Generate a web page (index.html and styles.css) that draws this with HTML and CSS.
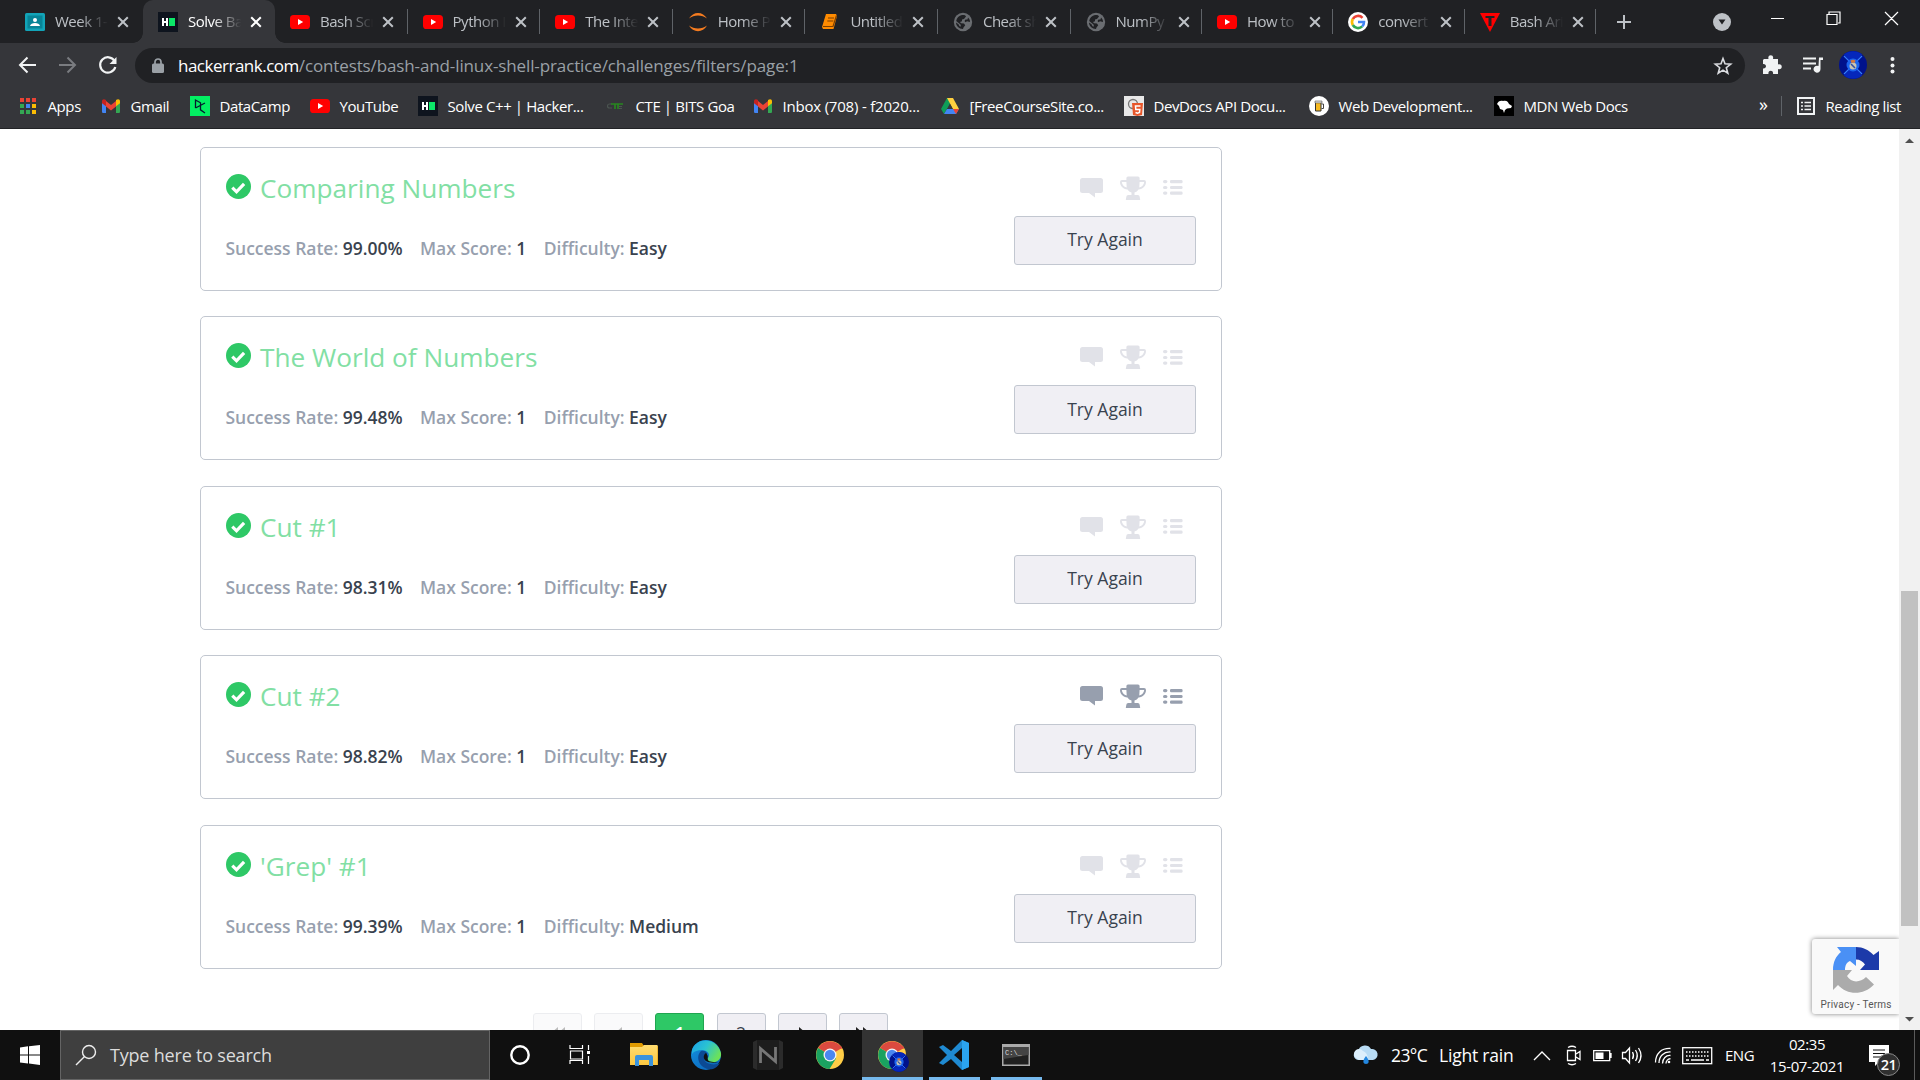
FILE: index.html
```html
<!DOCTYPE html>
<html lang="en">
<head>
<meta charset="utf-8">
<title>Solve Bash | HackerRank</title>
<link rel="stylesheet" href="styles.css">
</head>
<body>
<svg class="defs" width="0" height="0">
  <symbol id="close" viewBox="0 0 12 12"><path d="M1.2 1.2l9.6 9.6M10.8 1.2l-9.6 9.6" stroke="currentColor" stroke-width="2" fill="none"/></symbol>
  <symbol id="youtube" viewBox="0 0 20 20"><rect y="3" width="20" height="14" rx="3.6" fill="#f00"/><path d="M8 7v6l5.2-3z" fill="#fff"/></symbol>
  <symbol id="hr" viewBox="0 0 20 20"><path d="M0 0h20v20H0z" fill="#0e141e"/><path d="M4 6h2v3h2V6h2v8H8v-3H6v3H4z" fill="#fff"/><path d="M11 6h6v8h-6z" fill="#0ce868"/></symbol>
  <symbol id="globe" viewBox="0 0 20 20"><circle cx="10" cy="10" r="9.2" fill="#6a6d71"/><path d="M9 3c2-.3 4 .2 4 1.500L11 7 9 7.500v1.700l-2 .8 1 1.200 3 .3 1.200 1.800-1.700 2.200-.5 1.500C6 17 3 14 3 10.500l2.500 1.800 1 2 1.500.2-.5-2L5 10.500 3.200 9C3.700 6 6 3.500 9 3zM15 5.500c1.300 1.200 2 2.500 2 4.500l-3-.8-1.500 1L11.500 9l1-1.500h2z" fill="#202124"/></symbol>
  <symbol id="gmail" viewBox="0 0 20 20"><path d="M1 5v10.500c0 1 .5 1.500 1.500 1.500H5V8z" fill="#4285f4"/><path d="M15 8v9h2.500c1 0 1.500-.5 1.500-1.500V5z" fill="#34a853"/><path d="M5 5l5 4 5-4v5.500l-5 4-5-4z" fill="#ea4335"/><path d="M1 5.500C1 3 3 2.500 5 4v6.200L1 7.300z" fill="#c5221f"/><path d="M19 5.500C19 3 17 2.500 15 4v6.200l4-2.900z" fill="#fbbc04"/></symbol>
  <symbol id="chrome" viewBox="0 0 28 28"><circle cx="14" cy="14" r="14" fill="#ffcd46"/><path d="M14 14L2 7a14 14 0 0 1 24 0z" fill="#db4a3f"/><path d="M2 7a14 14 0 0 0 11.500 21L20 17.500 14 14z" fill="#1aa260"/><path d="M14 7.500h12.300L25 5H14z" fill="#db4a3f"/><circle cx="14" cy="14" r="6.500" fill="#f4f4f4"/><circle cx="14" cy="14" r="5.200" fill="#4b87f0"/></symbol>
  <symbol id="crest" viewBox="0 0 28 28"><circle cx="14" cy="14" r="14" fill="#00128c"/><path d="M14 14L5 3.500a14 14 0 0 1 18 0zM14 14L5 24.500a14 14 0 0 0 18 0z" fill="#0527bb"/><path d="M5 5l9 9 9-9M5 23l9-9 9 9" stroke="#347dff" stroke-width="1.200" fill="none"/><circle cx="14" cy="14" r="6.500" fill="#1b65ef"/><circle cx="14" cy="15" r="3.500" fill="#c9c6b4"/><path d="M12 13l4 4" stroke="#3350a0" stroke-width="1.600"/><path d="M11.500 9.500q2.500-1.500 5 0l-.7 2.200h-3.600z" fill="#d7793a"/></symbol>
  <symbol id="check" viewBox="0 0 25 25"><circle cx="12.500" cy="12.500" r="12.500" fill="#2ec866"/><path d="M6.300 13.700l4.200 4.100 7.600-7.900" stroke="#fff" stroke-width="3.200" fill="none"/></symbol>
  <symbol id="comment" viewBox="0 0 23 20"><path d="M2.500 0h18A2.500 2.500 0 0 1 23 2.500v10a2.500 2.500 0 0 1-2.500 2.500H15v4.500L9 15H2.500A2.500 2.500 0 0 1 0 12.500v-10A2.500 2.500 0 0 1 2.500 0z"/></symbol>
  <symbol id="trophy" viewBox="0 0 26 24"><path fill-rule="evenodd" d="M8 .5h10a1.600 1.600 0 0 1 1.600 1.600V4H24q2 0 2 2c0 4-3 7-7.500 7.500-1 1.500-2.300 2.500-4 3v2.500h3.500q1.800 0 1.800 2.500l.4 2.500H5.800l.4-2.500q0-2.500 1.800-2.500h3.500v-2.500c-1.700-.5-3-1.500-4-3C3 13 0 10 0 6q0-2 2-2h4.400V2.100A1.600 1.600 0 0 1 8 .5zM1.800 6c.2 2.600 2 4.600 4.900 5.500L6.400 6zM24.200 6h-4.600l-.3 5.500c2.900-.9 4.700-2.900 4.900-5.500z"/></symbol>
  <symbol id="list" viewBox="0 0 20 15"><rect width="4.400" height="3.200" rx="1.600"/><rect y="5.900" width="4.400" height="3.200" rx="1.600"/><rect y="11.500" width="4.400" height="3.200" rx="1.600"/><rect x="7" width="12.600" height="3.200" rx="1.300"/><rect x="7" y="5.900" width="12.600" height="3.200" rx="1.300"/><rect x="7" y="11.500" width="12.600" height="3.200" rx="1.300"/></symbol>
</svg>

<header class="browser">
  <div class="tabstrip">
    <div class="tab plain"><svg class="fav" viewBox="0 0 20 20"><rect y="1" width="20" height="18" rx="1.500" fill="#12a4b8"/><path d="M2.500 3.500h15v13h-15z" fill="#078497"/><circle cx="10" cy="8" r="2" fill="#fff"/><path d="M5 14c.5-4 9.500-4 10 0z" fill="#fff"/></svg><span class="name">Week 1-</span><svg class="x"><use href="#close"/></svg></div>
    <div class="tab active"><svg class="fav"><use href="#hr"/></svg><span class="name">Solve Ba</span><svg class="x"><use href="#close"/></svg></div>
    <div class="tab"><svg class="fav"><use href="#youtube"/></svg><span class="name">Bash Scr</span><svg class="x"><use href="#close"/></svg></div>
    <div class="tab"><svg class="fav"><use href="#youtube"/></svg><span class="name">Python I</span><svg class="x"><use href="#close"/></svg></div>
    <div class="tab"><svg class="fav"><use href="#youtube"/></svg><span class="name">The Inte</span><svg class="x"><use href="#close"/></svg></div>
    <div class="tab"><svg class="fav" viewBox="0 0 20 20"><path d="M1 6.500C5-1 15-1 19 6.500 14 2.500 6 2.500 1 6.500zM1 13.500C5 21 15 21 19 13.500 14 17.500 6 17.500 1 13.500z" fill="#f57c20"/></svg><span class="name">Home P</span><svg class="x"><use href="#close"/></svg></div>
    <div class="tab"><svg class="fav" viewBox="0 0 20 20"><path d="M6 2h10l1 2-3.500 13H3l-1-2z" fill="#ff8b00"/><path d="M8 6h6M7.300 9h6M3 14.500h10l3.500-11" stroke="#7d3f00" stroke-width="1.200" fill="none"/></svg><span class="name">Untitled</span><svg class="x"><use href="#close"/></svg></div>
    <div class="tab"><svg class="fav"><use href="#globe"/></svg><span class="name">Cheat sh</span><svg class="x"><use href="#close"/></svg></div>
    <div class="tab late"><svg class="fav"><use href="#globe"/></svg><span class="name">NumPy</span><svg class="x"><use href="#close"/></svg></div>
    <div class="tab late"><svg class="fav"><use href="#youtube"/></svg><span class="name">How to</span><svg class="x"><use href="#close"/></svg></div>
    <div class="tab late"><svg class="fav" viewBox="0 0 20 20"><circle cx="10" cy="10" r="10" fill="#fff"/><g fill="none" stroke-width="2.600"><path d="M14.500 5.800A6 6 0 0 0 4.800 7.200" stroke="#ea4335"/><path d="M4.800 7A6 6 0 0 0 4.800 13" stroke="#fbbc05"/><path d="M4.800 13a6 6 0 0 0 9.400 1.400" stroke="#34a853"/><path d="M14.200 14.400A6 6 0 0 0 16 10h-6" stroke="#4285f4"/></g></svg><span class="name">convert</span><svg class="x"><use href="#close"/></svg></div>
    <div class="tab late"><svg class="fav" viewBox="0 0 20 20"><path d="M0 1h20l-10 19z" fill="#f00"/><path d="M5.500 4h9v2h-3v8h-3V6h-3z" fill="#202124"/></svg><span class="name">Bash Ari</span><svg class="x"><use href="#close"/></svg></div>
    <svg class="strip-end" viewBox="0 0 324 43" fill="none"><path d="M21 22h14M28 15v14" stroke="#bdc1c6" stroke-width="2"/><circle cx="126" cy="22" r="9" fill="#bdc1c6"/><path d="M122.500 19.500h7l-3.500 5z" fill="#202124"/><path d="M175 18.500h13M231 14.500h10v10h-10zM233 14v-2h11v11h-2M289 12l13 13M302 12l-13 13" stroke="#fff" stroke-width="1.200"/></svg>
  </div>
  <div class="toolbar">
    <svg class="nav" viewBox="0 0 135 43" fill="none" stroke-width="2"><path d="M36 22H20m7.500-7.500L20 22l7.500 7.500" stroke="#f1f3f4"/><path d="M59 22h16m-7.500-7.500L75 22l-7.500 7.500" stroke="#7a7c80"/><path d="M114.500 18a7.700 7.700 0 1 0 .8 6" stroke="#f1f3f4" stroke-width="2.200"/><path d="M116.500 14v7h-7z" fill="#f1f3f4"/></svg>
    <div class="omnibox">
      <svg class="lock" viewBox="0 0 12 15"><path d="M3 6V4a3 3 0 0 1 6 0v2" fill="none" stroke="#9aa0a6" stroke-width="1.700"/><rect y="5.500" width="12" height="9.500" rx="1.500" fill="#9aa0a6"/></svg>
      <span class="url"><b>hackerrank.com</b>/contests/bash-and-linux-shell-practice/challenges/filters/page:1</span>
      <svg class="star" viewBox="0 0 20 20"><path d="M10 2.500l2 5.300 5.700.3-4.400 3.600 1.500 5.500L10 14.100l-4.800 3.100 1.500-5.500-4.400-3.600 5.700-.3z" fill="none" stroke="#dadce0" stroke-width="1.600"/></svg>
    </div>
    <svg class="tools" viewBox="0 0 175 43"><path d="M19 16h4.500c-1.500-5 6-5 4.500 0h5v5.500c5-1.500 5 6 0 4.500V31h-5c1-4.500-5.500-4.500-4.500 0H18v-5.500c4 .5 4-5 0-4.500v-4z" fill="#f1f3f4"/><path d="M58 15.500h13M58 20.500h13M58 25.500h8" stroke="#f1f3f4" stroke-width="2"/><path d="M74 14.500h4v2.500h-2.500v9a3.500 3.500 0 1 1-2-3z" fill="#f1f3f4"/><use href="#crest" x="94" y="8" width="28" height="28"/><g fill="#f1f3f4"><circle cx="147.500" cy="16" r="2"/><circle cx="147.500" cy="22.500" r="2"/><circle cx="147.500" cy="28.500" r="2"/></g></svg>
  </div>
  <nav class="bookmarks">
    <a><svg class="fav" viewBox="0 0 20 20"><path d="M2 2h4v4H2zm6 0h4v4H8zm6 0h4v4h-4z" fill="#ea4335"/><path d="M2 8h4v4H2zm0 6h4v4H2zm6 0h4v4H8z" fill="#34a853"/><path d="M8 8h4v4H8z" fill="#4285f4"/><path d="M14 8h4v4h-4zm0 6h4v4h-4z" fill="#fbbc04"/></svg>Apps</a>
    <a><svg class="fav"><use href="#gmail"/></svg>Gmail</a>
    <a><svg class="fav" viewBox="0 0 20 20"><path d="M0 0h20v20H0z" fill="#03ef62"/><path d="M5.500 12V4l5 2.800v7l4.500 3.200M5.500 12l9.500-5" fill="none" stroke="#05192d" stroke-width="1.300"/></svg>DataCamp</a>
    <a><svg class="fav"><use href="#youtube"/></svg>YouTube</a>
    <a><svg class="fav"><use href="#hr"/></svg>Solve C++ | Hacker...</a>
    <a><svg class="fav" viewBox="0 0 20 20"><path d="M6 8H3.500a2 2 0 0 0 0 4H6" stroke="#4b5450" stroke-width="1.200" fill="none"/><path d="M5 8h12M9 8v5M12 8v5" stroke="#27861f" stroke-width="1.700"/><path d="M13 10.500h3M13 12.500h3" stroke="#4b5450"/></svg>CTE | BITS Goa</a>
    <a class="wide"><svg class="fav"><use href="#gmail"/></svg>Inbox (708) - f2020...</a>
    <a><svg class="fav" viewBox="0 0 20 20"><path d="M7 2h6L7.500 12l-3.500 6-3-5z" fill="#0f9d58"/><path d="M7 2h6l6 11h-6z" fill="#ffcf3f"/><path d="M7 13h12l-3 5H4z" fill="#4285f4"/><path d="M13 13h6l-3 5z" fill="#ea4335"/><path d="M10 8l2.500 5h-5z" fill="#35363a"/></svg>[FreeCourseSite.co...</a>
    <a><svg class="fav" viewBox="0 0 20 20"><path d="M0 0h20v20H0z" fill="#e8e8e8"/><circle cx="9" cy="8" r="4.500" fill="none" stroke="#777" stroke-width="1.300"/><path d="M8 7h11l-1 12-4.500 1L9 19z" fill="#e8562a"/><path d="M16.500 10h-5l.3 3.500h4l-.3 3-2 .6-2-.6" fill="none" stroke="#fff" stroke-width="1.500"/></svg>DevDocs API Docu...</a>
    <a><svg class="fav" viewBox="0 0 20 20"><circle cx="10" cy="10" r="10" fill="#fff"/><path d="M6.500 6.500H12V15H6.500z" fill="#f5b921" stroke="#333"/><path d="M12.500 8h2v4.500h-2" fill="none" stroke="#444"/><path d="M6 5h7v2H6z" fill="#ddd" stroke="#555" stroke-width=".6"/></svg>Web Development...</a>
    <a><svg class="fav" viewBox="0 0 20 20"><path d="M0 0h20v20H0z"/><path d="M3 8c1-3 4-4 6-3 4-1 5 1 6 3l3 2-1 2-4 .5-2 1.500-1 3-1-3-3-1-1-3z" fill="#fff"/></svg>MDN Web Docs</a>
    <span class="more">»</span>
    <a class="reading"><svg class="fav" viewBox="0 0 20 20"><path d="M2 2h16v16H2z" fill="none" stroke="#f1f3f4" stroke-width="2"/><path d="M5 6.500h2M5 10h2M5 13.500h2M8.500 6.500H15M8.500 10H15M8.500 13.500H15" stroke="#f1f3f4" stroke-width="1.600"/></svg>Reading list</a>
  </nav>
</header>

<main class="viewport">
  <section class="page">
    <article class="card">
      <div class="info"><h2><svg class="check"><use href="#check"/></svg><span>Comparing Numbers</span></h2>
        <p>Success Rate: <b>99.00%</b><i></i>Max Score: <b>1</b><i></i>Difficulty: <b>Easy</b></p></div>
      <div class="side"><div class="icons"><svg class="c"><use href="#comment"/></svg><svg class="t"><use href="#trophy"/></svg><svg class="l"><use href="#list"/></svg></div><button>Try Again</button></div>
    </article>
    <article class="card">
      <div class="info"><h2><svg class="check"><use href="#check"/></svg><span>The World of Numbers</span></h2>
        <p>Success Rate: <b>99.48%</b><i></i>Max Score: <b>1</b><i></i>Difficulty: <b>Easy</b></p></div>
      <div class="side"><div class="icons"><svg class="c"><use href="#comment"/></svg><svg class="t"><use href="#trophy"/></svg><svg class="l"><use href="#list"/></svg></div><button>Try Again</button></div>
    </article>
    <article class="card">
      <div class="info"><h2><svg class="check"><use href="#check"/></svg><span>Cut #1</span></h2>
        <p>Success Rate: <b>98.31%</b><i></i>Max Score: <b>1</b><i></i>Difficulty: <b>Easy</b></p></div>
      <div class="side"><div class="icons"><svg class="c"><use href="#comment"/></svg><svg class="t"><use href="#trophy"/></svg><svg class="l"><use href="#list"/></svg></div><button>Try Again</button></div>
    </article>
    <article class="card hovered">
      <div class="info"><h2><svg class="check"><use href="#check"/></svg><span>Cut #2</span></h2>
        <p>Success Rate: <b>98.82%</b><i></i>Max Score: <b>1</b><i></i>Difficulty: <b>Easy</b></p></div>
      <div class="side"><div class="icons"><svg class="c"><use href="#comment"/></svg><svg class="t"><use href="#trophy"/></svg><svg class="l"><use href="#list"/></svg></div><button>Try Again</button></div>
    </article>
    <article class="card">
      <div class="info"><h2><svg class="check"><use href="#check"/></svg><span>'Grep' #1</span></h2>
        <p>Success Rate: <b>99.39%</b><i></i>Max Score: <b>1</b><i></i>Difficulty: <b>Medium</b></p></div>
      <div class="side"><div class="icons"><svg class="c"><use href="#comment"/></svg><svg class="t"><use href="#trophy"/></svg><svg class="l"><use href="#list"/></svg></div><button>Try Again</button></div>
    </article>
    <div class="pager">
      <span class="off"><svg viewBox="0 0 14 12"><path d="M7 0v12L0 6zM14 0v12L7 6z"/></svg></span>
      <span class="off"><svg viewBox="0 0 14 12"><path d="M10 0v12L3 6z"/></svg></span>
      <span class="on">1</span><span>2</span>
      <span><svg viewBox="0 0 14 12"><path d="M4 0v12l7-6z"/></svg></span>
      <span><svg viewBox="0 0 14 12"><path d="M0 0v12l7-6zM7 0v12l7-6z"/></svg></span>
    </div>
  </section>
  <aside class="captcha">
    <svg viewBox="0 0 46 46"><path d="M23 0v19l-6-5c-3 1-5 4-5 9H0C0 15 3 9 8 5L4 0z" fill="#4a90f5"/><path d="M23 0c7 0 13 3 17.500 8L46 4v19H27l5-5.500c-2-3-5-5-9-5z" fill="#1c3aa9"/><path d="M0 23h19l-5 6c4 7 13 7 19 1l8 7.500C30 49 14 48 5 38l-5 5z" fill="#ababab"/></svg>
    <span>Privacy - Terms</span>
  </aside>
  <div class="scrollbar"><svg viewBox="0 0 21 21"><path d="M6 14h9l-4.500-4.500z"/></svg><div class="thumb"></div><svg viewBox="0 0 21 21"><path d="M6 8h9l-4.500 4.500z"/></svg></div>
</main>

<footer class="taskbar">
  <svg class="start" viewBox="0 0 60 50" fill="#fff"><path d="M20 17.500l8-1.200V24.500h-8zM29 16.200L40 15v9.500H29zM20 25.500h8v8l-8-1zM29 25.500h11V35l-11-1.400z"/></svg>
  <div class="search"><svg viewBox="0 0 22 22" fill="none" stroke="#eee" stroke-width="1.400"><circle cx="14" cy="8" r="6.500"/><path d="M9.300 12.700L1 21"/></svg>Type here to search</div>
  <svg class="apps" viewBox="490 0 560 50">
    <defs>
      <linearGradient id="edgeTop" x1="0" y1="0" x2="1" y2=".5"><stop offset="0" stop-color="#1ba0e8"/><stop offset=".5" stop-color="#2ac3d2"/><stop offset="1" stop-color="#6be15b"/></linearGradient>
      <linearGradient id="edgeSide" x1="0" y1="0" x2="1" y2="1"><stop offset="0" stop-color="#1492e0"/><stop offset="1" stop-color="#0a5fb4"/></linearGradient>
      <linearGradient id="folder" x1="0" y1="0" x2="0" y2="1"><stop offset="0" stop-color="#ffdc70"/><stop offset="1" stop-color="#fbc740"/></linearGradient>
    </defs>
    <circle cx="520" cy="25" r="8.700" fill="none" stroke="#fff" stroke-width="2.400"/>
    <path d="M570 15v3.500h12.500V15M570 34v-3.500h12.500V34M570.500 21h12v8h-12zM588.500 15v5M588.500 26v8" fill="none" stroke="#fff" stroke-width="1.200"/><path d="M587 21h3v3h-3z" fill="#fff"/>
    <path d="M630 13h12l2 3h14v19h-28z" fill="#e09a00"/><path d="M630 17h12l2-2h13.500v20H630z" fill="url(#folder)"/><path d="M635 36V27q0-2 2-2h14q2 0 2 2v9h-4v-6h-10v6z" fill="#3a93dc"/>
    <circle cx="706" cy="25" r="15" fill="url(#edgeSide)"/><path d="M692 20c4-13 25-13 29 3 1 7-6 11-12 9-3-1-3-3-1-4 3-4-1-8-6-8-4 0-8 1-10 4z" fill="url(#edgeTop)"/><path d="M701 21c-7 7 0 20 12 18 3-1 5-3 7-6-6 3-15 1-16-4-.5-4 2-5 3.500-5-1-3-4-4-6.500-3z" fill="#0c4a94"/><path d="M706 23c-3 2-3 6 0 8 3 2 9 2 12 1-4 0-9 0-10-2-1-3 1-3-2-7z" fill="#101010"/>
    <path d="M753 12l4-2h22l4 2v26l-4 2h-22l-4-2z" fill="#2b2b2b"/><path d="M757 10h22v30h-22z" fill="#1d1d1d"/><path d="M760.500 33V18.500l15 13V17" fill="none" stroke="#777" stroke-width="2.800"/>
    <use href="#chrome" x="816" y="11" width="28" height="28"/>
    <path d="M862 0h61v50h-61z" fill="#333"/><use href="#chrome" x="878" y="11" width="28" height="28"/><use href="#crest" x="889" y="22" width="20" height="20"/>
    <path d="M962 10l7 3v24l-7 3-11-11-8 6-4-2 8-8-8-8 4-2 8 6zM962 18l-8 7 8 7z" fill="#1f8ad2"/><path d="M962 10l7 3v24l-7 3z" fill="#2ba4f0"/>
    <path d="M1002 14h28v22h-28z" fill="#aaa"/><path d="M1003.500 17h25v17.500h-25z" fill="#202020"/><path d="M1003.500 17h25v8l-25 4z" fill="#444"/><text x="1005" y="24.500" class="prompt">C:\_</text>
    <path d="M862 47h61v3h-61zM929 47h51v3h-51zM991 47h51v3h-51z" fill="#76b9ed"/>
  </svg>
  <div class="weather"><svg viewBox="0 0 26 22"><path d="M6 16a5 5 0 0 1-.5-10A7 7 0 0 1 18 5a5.500 5.500 0 0 1 2 11z" fill="#b8dcf5"/><path d="M2 13a5 5 0 0 1 8-6q5 2 5 9H6z" fill="#dceffc"/><path d="M13 12c4 5 3 8 0 8s-4-3 0-8z" fill="#2387e0"/></svg><span class="deg">23°C</span><span class="cond">Light rain</span></div>
  <svg class="tray" viewBox="1526 0 194 50" fill="none" stroke="#fff" stroke-width="1.300">
    <path d="M1534 30l8-8 8 8"/>
    <path d="M1567.500 20.500h8v10h-8zM1576 24l4-2.500v8l-4-2.500M1568 17.500q4-2.500 8 0M1568 33.500q4 2.500 8 0"/>
    <path d="M1593.700 20.700h16v10h-16zM1611 23v5"/><path d="M1595.500 22.500h8v6.500h-8z" fill="#fff" stroke="none"/>
    <path d="M1622.500 22.500h3l4-4.500v15l-4-4.500h-3zM1632.500 22q2 3.500 0 7M1635.500 20q3.500 5.500 0 11M1638.500 18q5 7.500 0 15"/>
    <path d="M1655.500 32.500c0-9 6-14.500 15-14M1659 33c0-7 5-11.500 11.500-11M1662.500 33.500c0-5 3.500-8.500 8-8M1666 33.500c0-2.500 2-5 4.500-4.700"/><circle cx="1669" cy="32" r="1.300" fill="#fff" stroke="none"/>
    <rect x="1682.700" y="17.700" width="29" height="16"/><path d="M1686 22h23M1686 26h23" stroke-dasharray="1.500 1.500"/><path d="M1686 30h3M1691 30h13M1706 30h3"/>
  </svg>
  <span class="lang">ENG</span>
  <div class="clock"><span class="time">02:35</span><span class="date">15-07-2021</span></div>
  <div class="notify"><svg viewBox="0 0 22 22"><path d="M0 0h20v17h-10l-4 4v-4H0z" fill="#fff"/><path d="M4 5h12M4 8.500h12M4 12h8" stroke="#101010" stroke-width="1.200"/></svg><b>21</b></div>
</footer>
</body>
</html>
```
FILE: styles.css
```css
* { box-sizing: border-box; }
body {
  margin: 0; width: 1920px; height: 1080px; overflow: hidden; background: #fff;
  display: flex; flex-direction: column;
  font-family: "Open Sans", "Noto Sans", sans-serif;
}
svg { display: block; flex: none; }
.defs { position: absolute; }
.fav { width: 20px; height: 20px; }

/* Browser window */
.browser { height: 129px; flex: none; background: #35363a; border-bottom: 1px solid #222326; color: #fff; }
.tabstrip { height: 43px; padding-left: 10px; background: #202124; display: flex; }
.tab {
  width: 132.600px; height: 43px; flex: none; padding-left: 15px;
  display: flex; align-items: center; position: relative; color: #bdc1c6;
}
.tab::after { content: ""; position: absolute; right: 0; top: 9px; width: 1px; height: 25px; background: #5f6368; }
.late { width: 131.400px; }
.plain::after, .active::after { display: none; }
.name {
  width: 58px; margin: 0 0 1px 10px; white-space: nowrap;
  font-size: 15px; letter-spacing: -0.500px; line-height: 22px;
  mask-image: linear-gradient(90deg, #000 42%, transparent 92%);
}
.x { width: 12px; height: 12px; margin-left: 4px; }
.plain { width: 133px; }
.active { width: 132px; background: #35363a; border-radius: 10px 10px 0 0; color: #fff; }
.active::before {
  content: ""; position: absolute; left: -10px; right: -10px; bottom: 0; height: 10px;
  background:
    radial-gradient(circle at 0 0, transparent 9.500px, #35363a 10px) left / 10px 10px no-repeat,
    radial-gradient(circle at 100% 0, transparent 9.500px, #35363a 10px) right / 10px 10px no-repeat;
}
.strip-end { width: 324px; height: 43px; }

.toolbar { height: 43px; display: flex; }
.nav { width: 135px; height: 43px; }
.omnibox {
  width: 1610px; height: 35px; margin-top: 5px; padding: 0 12px 0 17px; border-radius: 18px;
  background: #202124; display: flex; align-items: center;
}
.lock { width: 12px; height: 15px; margin-right: 14px; }
.url { flex: 1; font-size: 17px; letter-spacing: -0.120px; line-height: 24px; color: #9aa0a6; }
.url b { font-weight: 400; letter-spacing: -0.500px; color: #fff; }
.star { width: 20px; height: 20px; }
.tools { width: 175px; height: 43px; }

.bookmarks {
  height: 40px; padding-left: 18px; display: grid; align-items: center;
  grid-template-columns: 83px 89px 120px 108px 188px 147px 187px 184px 185px 185px 265px 22px 1fr;
}
.bookmarks a { display: flex; align-items: center; gap: 9.500px; white-space: nowrap; font-size: 15px; letter-spacing: -0.400px; line-height: 20px; }
.bookmarks .wide { letter-spacing: -0.200px; }
.more { font-size: 18px; line-height: 20px; padding-bottom: 4px; }
.bookmarks .reading { height: 20px; padding-left: 14px; border-left: 1px solid #5f6368; }

/* Challenge list */
.viewport { height: 901px; flex: none; display: flex; position: relative; overflow: hidden; }
.page { flex: 1; padding: 17.600px 0 0 200px; }
.card {
  width: 1022px; height: 144px; margin-bottom: 25.600px; padding: 0 25px 0 24.500px;
  border: 1px solid #c2c7d0; border-radius: 5px; display: flex; justify-content: space-between;
}
.info { padding-top: 26px; }
h2 { margin: 0; display: flex; gap: 9.500px; font-size: 26.200px; font-weight: 400; line-height: 28px; color: #82dfa4; }
.check { width: 25px; height: 25px; }
p { margin: 34px 0 0; font-size: 17.500px; font-weight: 600; letter-spacing: -0.020px; line-height: 24px; color: #979fae; }
p b { font-weight: 600; color: #39424e; }
p i { display: inline-block; width: 17.500px; }
.side { width: 182px; padding-top: 27px; }
.icons { height: 26px; padding-left: 66px; display: flex; align-items: center; fill: #e1e2e8; }
.hovered .icons { fill: #979fae; }
.c { width: 23px; height: 20px; margin-right: 17px; }
.t { width: 26px; height: 24px; margin-right: 17px; }
.l { width: 20px; height: 15px; }
button {
  width: 182px; height: 49px; margin-top: 15px; padding: 0 0 2px; border: 1px solid #c2c7d0; border-radius: 3px;
  background: #f0eff4; color: #39424e; font: 17.500px "Open Sans", sans-serif;
}
.pager { display: flex; gap: 12.200px; padding: 18.400px 0 0 333px; }
.pager span {
  width: 49px; height: 40px; border: 1px solid #c2c7d0; border-radius: 3px; background: #f0eff4;
  display: flex; align-items: center; justify-content: center; font-size: 17.500px; color: #39424e;
}
.pager svg { width: 14px; height: 12px; fill: #222; }
.pager .off { opacity: .3; }
.pager .on { background: #2ec866; border-color: #20a550; color: #fff; font-weight: 600; }

.captcha {
  position: absolute; left: 1812px; top: 810px; width: 87px; height: 75px; border-radius: 3px 0 0 3px;
  background: #f9f9f9; box-shadow: 0 0 5px #808080; padding: 8px 0 0 8.500px;
  font: 10px/12px Roboto, sans-serif; letter-spacing: 0.220px; color: #555; white-space: nowrap;
}
.captcha svg { width: 46px; height: 46px; margin: 0 0 6px 12.500px; }
.scrollbar { width: 21px; background: #f1f1f1; position: relative; display: flex; flex-direction: column; justify-content: space-between; }
.scrollbar svg { width: 21px; height: 21px; fill: #505050; }
.thumb { position: absolute; left: 2px; top: 462px; width: 17px; height: 335px; background: #c1c1c1; }

/* Taskbar */
.taskbar { height: 50px; flex: none; background: #101010; color: #fff; display: flex; align-items: center; white-space: nowrap; }
.start { width: 60px; height: 50px; }
.search {
  width: 430px; height: 50px; padding-left: 14px; border: 1px solid #646464; background: #3f3f3f;
  display: flex; align-items: center; gap: 13px; font-size: 18px; letter-spacing: -0.200px; color: #dcdcdc;
}
.search svg { width: 22px; height: 22px; }
.apps { width: 560px; height: 50px; }
.prompt { font: 7px "Liberation Mono", monospace; fill: #ddd; }
.weather { width: 173px; margin-left: 303px; display: flex; align-items: center; font-size: 17.500px; letter-spacing: -0.200px; }
.weather svg { width: 26px; height: 22px; }
.deg { width: 48px; margin-left: 12px; letter-spacing: -0.600px; }
.tray { width: 194px; height: 50px; }
.lang { width: 42px; padding-left: 5px; font-size: 15px; letter-spacing: -0.500px; }
.clock { width: 90px; margin-right: 2px; padding-bottom: 1px; display: flex; flex-direction: column; align-items: center; font-size: 15px; line-height: 22px; letter-spacing: -0.400px; }
.notify { position: relative; width: 61px; height: 50px; padding: 15px 0 0 15px; border-right: 1px solid #5a5a5a; }
.notify svg { width: 22px; height: 22px; }
.notify b {
  position: absolute; left: 23px; top: 23px; width: 23px; height: 23px; border: 1px solid #888; border-radius: 50%;
  background: #303030; font-size: 14.500px; font-weight: 600; line-height: 21px; text-align: center; letter-spacing: -0.500px;
}
```
